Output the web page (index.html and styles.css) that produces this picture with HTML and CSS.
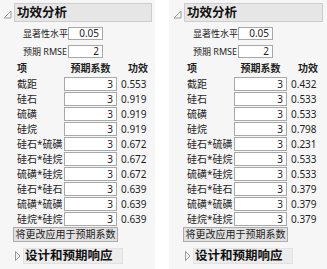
FILE: index.html
```html
<!DOCTYPE html>
<html lang="zh">
<head>
<meta charset="utf-8">
<link rel="stylesheet" href="styles.css">
</head>
<body>
<div class="wrap">
  <div class="panel">
    <div class="head">
      <svg class="tri" width="9" height="9" viewBox="0 0 9 9"><polygon points="1,8 8,8 8,1" fill="none" stroke="#9a9a9a" stroke-width="1"/></svg>
      <div class="title">功效分析</div>
    </div>
    <div class="param"><span class="plabel">显著性水平</span><span class="pbox">0.05</span></div>
    <div class="param"><span class="plabel">预期 RMSE</span><span class="pbox">2</span></div>
    <div class="thead"><span class="c1">项</span><span class="c2">预期系数</span><span class="c3">功效</span></div>
    <div class="row"><span class="c1">截距</span><span class="cbox">3</span><span class="c3">0.553</span></div>
    <div class="row"><span class="c1">硅石</span><span class="cbox">3</span><span class="c3">0.919</span></div>
    <div class="row"><span class="c1">硫磺</span><span class="cbox">3</span><span class="c3">0.919</span></div>
    <div class="row"><span class="c1">硅烷</span><span class="cbox">3</span><span class="c3">0.919</span></div>
    <div class="row"><span class="c1">硅石*硫磺</span><span class="cbox">3</span><span class="c3">0.672</span></div>
    <div class="row"><span class="c1">硅石*硅烷</span><span class="cbox">3</span><span class="c3">0.672</span></div>
    <div class="row"><span class="c1">硫磺*硅烷</span><span class="cbox">3</span><span class="c3">0.672</span></div>
    <div class="row"><span class="c1">硅石*硅石</span><span class="cbox">3</span><span class="c3">0.639</span></div>
    <div class="row"><span class="c1">硫磺*硫磺</span><span class="cbox">3</span><span class="c3">0.639</span></div>
    <div class="row"><span class="c1">硅烷*硅烷</span><span class="cbox">3</span><span class="c3">0.639</span></div>
    <div class="btnrow"><button class="btn">将更改应用于预期系数</button></div>
    <div class="sub">
      <svg class="tri2" width="6" height="10" viewBox="0 0 6 10"><polygon points="0.5,0.5 5,5 0.5,9.5" fill="none" stroke="#9a9a9a" stroke-width="1"/></svg>
      <div class="subtitle">设计和预期响应</div>
    </div>
  </div>
  <div class="panel panel-r">
    <div class="head">
      <svg class="tri" width="9" height="9" viewBox="0 0 9 9"><polygon points="1,8 8,8 8,1" fill="none" stroke="#9a9a9a" stroke-width="1"/></svg>
      <div class="title">功效分析</div>
    </div>
    <div class="param"><span class="plabel">显著性水平</span><span class="pbox">0.05</span></div>
    <div class="param"><span class="plabel">预期 RMSE</span><span class="pbox">2</span></div>
    <div class="thead"><span class="c1">项</span><span class="c2">预期系数</span><span class="c3">功效</span></div>
    <div class="row"><span class="c1">截距</span><span class="cbox">3</span><span class="c3">0.432</span></div>
    <div class="row"><span class="c1">硅石</span><span class="cbox">3</span><span class="c3">0.533</span></div>
    <div class="row"><span class="c1">硫磺</span><span class="cbox">3</span><span class="c3">0.533</span></div>
    <div class="row"><span class="c1">硅烷</span><span class="cbox">3</span><span class="c3">0.798</span></div>
    <div class="row"><span class="c1">硅石*硫磺</span><span class="cbox">3</span><span class="c3">0.231</span></div>
    <div class="row"><span class="c1">硅石*硅烷</span><span class="cbox">3</span><span class="c3">0.533</span></div>
    <div class="row"><span class="c1">硫磺*硅烷</span><span class="cbox">3</span><span class="c3">0.533</span></div>
    <div class="row"><span class="c1">硅石*硅石</span><span class="cbox">3</span><span class="c3">0.379</span></div>
    <div class="row"><span class="c1">硫磺*硫磺</span><span class="cbox">3</span><span class="c3">0.379</span></div>
    <div class="row"><span class="c1">硅烷*硅烷</span><span class="cbox">3</span><span class="c3">0.379</span></div>
    <div class="btnrow"><button class="btn">将更改应用于预期系数</button></div>
    <div class="sub">
      <svg class="tri2" width="6" height="10" viewBox="0 0 6 10"><polygon points="0.5,0.5 5,5 0.5,9.5" fill="none" stroke="#9a9a9a" stroke-width="1"/></svg>
      <div class="subtitle">设计和预期响应</div>
    </div>
  </div>
</div>
</body>
</html>
```
FILE: styles.css
```css
html, body {
  margin: 0;
  padding: 0;
  background: #ffffff;
}
body {
  font-family: "Noto Sans", "Noto Sans CJK SC", sans-serif;
  font-size: 10px;
  color: #1e1e1e;
}
.wrap {
  display: flex;
  height: 269px;
}
.panel {
  width: 155px;
  background: #f6f6f6;
  padding: 3px 3px 0 3px;
  box-sizing: border-box;
  display: flex;
  flex-direction: column;
}
.panel-r {
  margin-left: 14px;
  width: 158px;
  padding-left: 4px;
  padding-right: 4px;
}
.head {
  display: flex;
  align-items: center;
  height: 19px;
}
.tri {
  width: 9px;
  height: 9px;
  margin-right: 2px;
  margin-top: 4px;
}
.title {
  flex: 1;
  height: 19px;
  box-sizing: border-box;
  border: 1px solid #cdcdcd;
  background: #e6e6e6;
  font-weight: bold;
  font-size: 12.5px;
  line-height: 17px;
  padding-left: 2px;
  color: #111;
}
.param {
  display: flex;
  align-items: center;
  margin-top: 5px;
  padding-left: 20px;
  height: 13px;
}
.plabel {
  width: 45px;
  white-space: nowrap;
  font-size: 9px;
}
.pbox {
  width: 35px;
  height: 13px;
  box-sizing: border-box;
  border: 1px solid #a8a8a8;
  background: #fff;
  text-align: right;
  padding-right: 3px;
  line-height: 11px;
}
.thead {
  display: flex;
  align-items: center;
  height: 18px;
  padding-left: 14px;
  font-weight: bold;
}
.thead .c1 {
  width: 47px;
}
.thead .c2 {
  width: 53px;
  text-align: center;
}
.thead .c3 {
  width: 31px;
  text-align: right;
}
.row {
  display: flex;
  align-items: center;
  height: 15px;
  padding-left: 14px;
}
.row .c1 {
  width: 47px;
  white-space: nowrap;
}
.cbox {
  width: 53px;
  height: 14px;
  box-sizing: border-box;
  border: 1px solid #a8a8a8;
  background: #fff;
  text-align: right;
  padding-right: 3px;
  line-height: 12px;
}
.row .c3 {
  padding-left: 4px;
}
.btnrow {
  display: flex;
  margin-top: 1px;
  padding-left: 10px;
}
.btn {
  height: 15px;
  width: 105px;
  padding: 0;
  border: 1px solid #adadad;
  background: #e1e1e1;
  font-family: "Noto Sans", "Noto Sans CJK SC", sans-serif;
  font-size: 10px;
  color: #1e1e1e;
  line-height: 13px;
  white-space: nowrap;
}
.sub {
  display: flex;
  align-items: center;
  margin-top: 6px;
  padding-left: 12px;
  height: 16px;
}
.tri2 {
  margin-right: 2px;
}
.subtitle {
  width: 100px;
  height: 16px;
  box-sizing: border-box;
  background: #ececec;
  border: 1px solid #e2e2e2;
  font-weight: bold;
  font-size: 12.5px;
  line-height: 14px;
  padding-left: 1px;
  color: #111;
}
```
